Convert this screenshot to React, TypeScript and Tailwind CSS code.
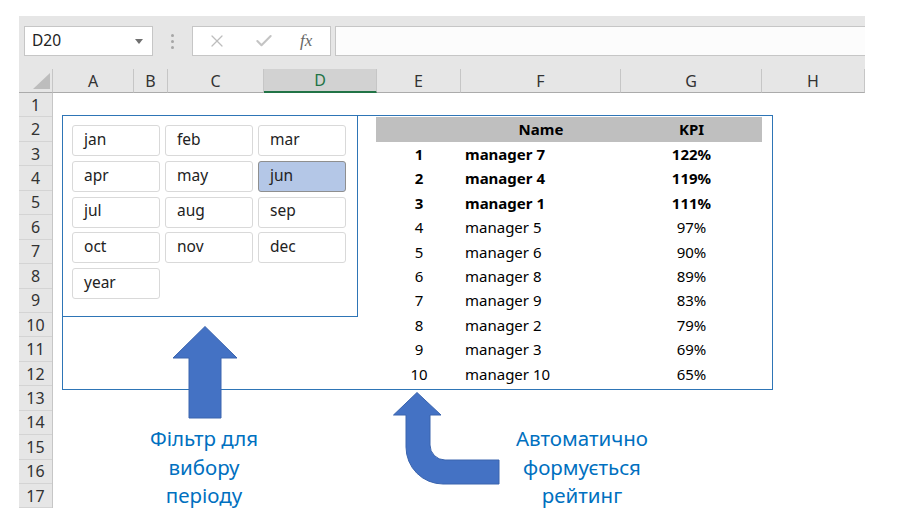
import { X, Check } from "lucide-react";

const columns = [
  { name: "A", w: "w-[81px]" },
  { name: "B", w: "w-[34px]" },
  { name: "C", w: "w-[96px]" },
  { name: "D", w: "w-[113px]" },
  { name: "E", w: "w-[84px]" },
  { name: "F", w: "w-[160px]" },
  { name: "G", w: "w-[141px]" },
  { name: "H", w: "w-[103px]" },
];

const months = ["jan", "feb", "mar", "apr", "may", "jun", "jul", "aug", "sep", "oct", "nov", "dec", "year"];

const ranking = [
  { name: "manager 7", kpi: "122%" },
  { name: "manager 4", kpi: "119%" },
  { name: "manager 1", kpi: "111%" },
  { name: "manager 5", kpi: "97%" },
  { name: "manager 6", kpi: "90%" },
  { name: "manager 8", kpi: "89%" },
  { name: "manager 9", kpi: "83%" },
  { name: "manager 2", kpi: "79%" },
  { name: "manager 3", kpi: "69%" },
  { name: "manager 10", kpi: "65%" },
];

const rows = Array.from({ length: 17 }, (_, i) => i + 1);

const Toolbar = () => {
  return (
    <div className="bg-[#e6e6e6] pt-[10px] pb-[13px]">
      <div className="flex items-center h-[30px]">
        <div className="ml-[5px] w-[129px] h-full bg-white border border-[#c6c6c6] flex items-center justify-between pl-[7px] pr-[9px]">
          <span className="text-[15.5px] text-[#222]">D20</span>
          <svg width="8" height="5" viewBox="0 0 8 5">
            <path d="M0 0 L8 0 L4 5 Z" fill="#707070" />
          </svg>
        </div>
        <div className="w-[39px] flex flex-col items-center gap-[3px]">
          <span className="w-[3px] h-[3px] rounded-full bg-[#a6a6a6]" />
          <span className="w-[3px] h-[3px] rounded-full bg-[#a6a6a6]" />
          <span className="w-[3px] h-[3px] rounded-full bg-[#a6a6a6]" />
        </div>
        <div className="w-[139px] h-full bg-white border border-[#c6c6c6] flex items-center">
          <X size={20} strokeWidth={1.5} className="ml-[14px] text-[#bdbdbd]" />
          <Check size={20} strokeWidth={2.5} className="ml-[27px] text-[#c4c4c4]" />
          <span className="ml-[26px] text-[17px] italic text-[#666] font-['Liberation_Serif',serif]">fx</span>
        </div>
        <div className="ml-[4px] flex-1 h-full bg-[#fcfcfc] border-y border-l border-[#c6c6c6]" />
      </div>
    </div>
  );
};

const ColumnHeaders = () => {
  return (
    <div className="flex h-[24px] bg-[#e6e6e6]">
      <div className="w-[34px] h-full border-r border-[#c6c6c6] border-b border-b-[#ababab] flex items-end justify-end pr-[2px] pb-[3px]">
        <svg width="17" height="16" viewBox="0 0 17 16">
          <path d="M17 0 L17 16 L0 16 Z" fill="#bdbdbd" />
        </svg>
      </div>
      {columns.map(col => (
        <div
          key={col.name}
          className={`${col.w} h-full flex items-center justify-center border-r border-[#c6c6c6] text-[16px] ${col.name === "D" ? "bg-[#d2d2d2] border-b-2 border-b-[#217346] text-[#217346]" : "border-b border-b-[#ababab] text-[#333]"}`}
        >
          {col.name}
        </div>
      ))}
    </div>
  );
};

const Slicer = () => {
  return (
    <div className="absolute left-[9px] top-[22px] w-[296px] h-[202px] border border-[#2e75b6] bg-white pt-[9px] pl-[9px]">
      <div className="grid grid-cols-[88px_88px_88px] auto-rows-[31px] gap-x-[5px] gap-y-[4.75px]">
        {months.map(m => (
          <div
            key={m}
            className={`rounded-[3px] border flex items-center pl-[11px] pb-[2px] text-[15.5px] text-[#222] ${m === "jun" ? "bg-[#b4c7e7] border-[#8f8f8f]" : "bg-white border-[#d9d9d9]"}`}
          >
            {m}
          </div>
        ))}
      </div>
    </div>
  );
};

const RankingTable = () => {
  return (
    <div className="col-start-5 col-span-3 row-start-2 row-span-11 grid grid-cols-[84px_160px_141px] grid-rows-[repeat(11,24.45px)] text-[15px] text-black">
      <div className="bg-[#bfbfbf] -ml-px" />
      <div className="bg-[#bfbfbf] font-bold flex items-center justify-center">Name</div>
      <div className="bg-[#bfbfbf] font-bold flex items-center justify-center">KPI</div>
      {ranking.map((r, i) => {
        const bold = i < 3 ? "font-bold" : "";
        return [
          <div key={`r${i}`} className={`flex items-center justify-center ${bold}`}>{i + 1}</div>,
          <div key={`n${i}`} className={`flex items-center pl-[4px] ${bold}`}>{r.name}</div>,
          <div key={`k${i}`} className={`flex items-center justify-center ${bold}`}>{r.kpi}</div>,
        ];
      })}
    </div>
  );
};

const Sheet = () => {
  return (
    <div className="flex">
      <div className="w-[34px] flex flex-col bg-[#e6e6e6] border-r border-[#c6c6c6]">
        {rows.map(r => (
          <div key={r} className="h-[24.45px] flex items-center justify-center border-b border-[#d4d4d4] text-[16px] text-[#333]">
            {r}
          </div>
        ))}
      </div>
      <div className="relative grid grid-cols-[81px_34px_96px_113px_84px_160px_141px_103px] grid-rows-[repeat(17,24.45px)] bg-white">
        <RankingTable />

        {/* outer frame round slicer + ranking */}
        <div className="absolute left-[9px] top-[22px] w-[711px] h-[275px] border border-[#2e75b6]" />
        <Slicer />

        {/* straight arrow */}
        <svg className="absolute left-[119px] top-[233px]" width="66" height="93" viewBox="0 0 66 93">
          <path d="M33 0.5 L65 32 L49 32 L49 92 L17 92 L17 32 L1 32 Z" fill="#4472c4" stroke="#3a64ae" strokeWidth="1" />
        </svg>

        {/* bent arrow */}
        <svg className="absolute left-[340px] top-[299px]" width="107" height="94" viewBox="0 0 107 94">
          <path
            d="M24 0.5 L48 23 L37 23 L37 53 A15 15 0 0 0 52 68 L106 68 L106 92 L50 92 A37 37 0 0 1 13 55 L13 23 L0.5 23 Z"
            fill="#4472c4"
            stroke="#3a64ae"
            strokeWidth="1"
          />
        </svg>

        <div className="absolute left-[76px] top-[331px] w-[150px] text-center text-[20.5px] leading-[28.5px] text-[#0070c0]">
          <p>Фільтр для</p>
          <p>вибору</p>
          <p>періоду</p>
        </div>
        <div className="absolute left-[449px] top-[331px] w-[160px] text-center text-[20.5px] leading-[28.5px] text-[#0070c0]">
          <p>Автоматично</p>
          <p>формується</p>
          <p>рейтинг</p>
        </div>
      </div>
    </div>
  );
};

const App = () => {
  return (
    <div className="w-[904px] h-[527px] bg-white overflow-hidden pt-[16px] pl-[19px] font-['Noto_Sans','Liberation_Sans',sans-serif]">
      <div className="w-[846px]">
        <Toolbar />
        <ColumnHeaders />
        <Sheet />
      </div>
    </div>
  );
};

export default App;
